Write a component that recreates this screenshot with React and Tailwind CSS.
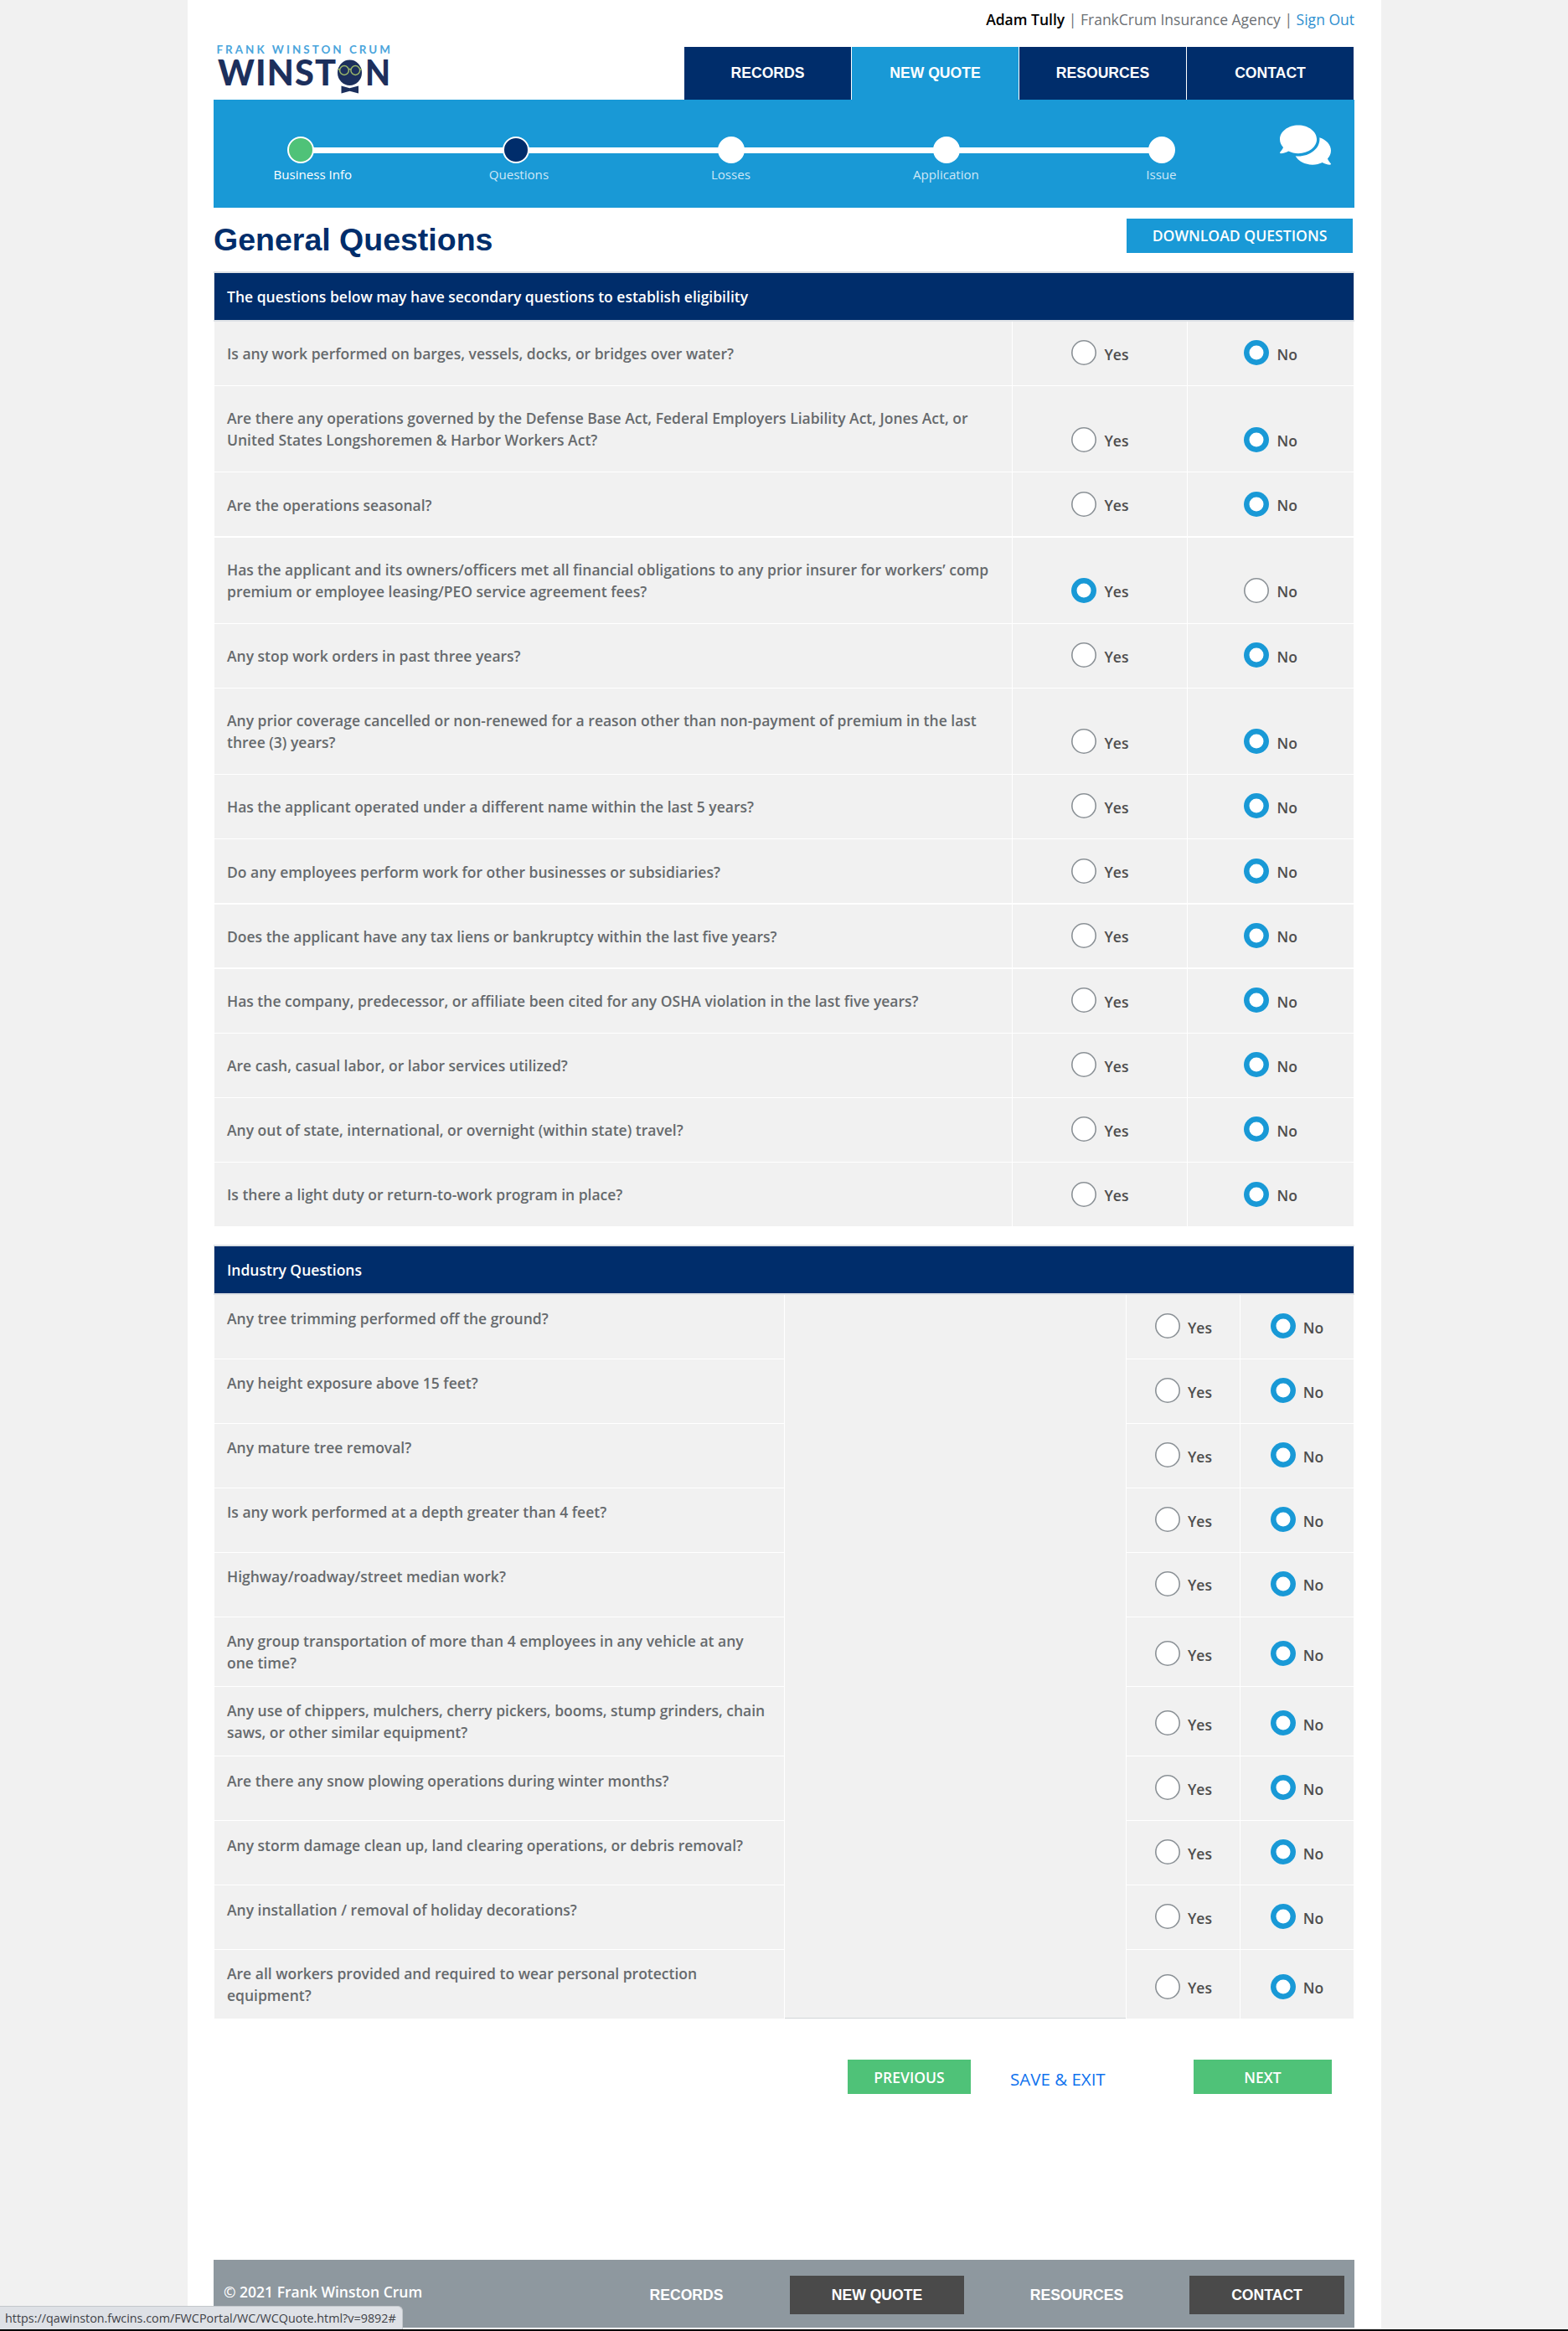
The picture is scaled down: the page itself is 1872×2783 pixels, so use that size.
import React from "react";
import { FaComments } from "react-icons/fa";

const SANS = "font-['Liberation_Sans',Arial,sans-serif]";

const generalQuestions = [
  { lines: ["Is any work performed on barges, vessels, docks, or bridges over water?"], answer: "No" },
  {
    lines: [
      "Are there any operations governed by the Defense Base Act, Federal Employers Liability Act, Jones Act, or",
      "United States Longshoremen & Harbor Workers Act?",
    ],
    answer: "No",
  },
  { lines: ["Are the operations seasonal?"], answer: "No" },
  {
    lines: [
      "Has the applicant and its owners/officers met all financial obligations to any prior insurer for workers’ comp",
      "premium or employee leasing/PEO service agreement fees?",
    ],
    answer: "Yes",
  },
  { lines: ["Any stop work orders in past three years?"], answer: "No" },
  {
    lines: [
      "Any prior coverage cancelled or non-renewed for a reason other than non-payment of premium in the last",
      "three (3) years?",
    ],
    answer: "No",
  },
  { lines: ["Has the applicant operated under a different name within the last 5 years?"], answer: "No" },
  { lines: ["Do any employees perform work for other businesses or subsidiaries?"], answer: "No" },
  { lines: ["Does the applicant have any tax liens or bankruptcy within the last five years?"], answer: "No" },
  { lines: ["Has the company, predecessor, or affiliate been cited for any OSHA violation in the last five years?"], answer: "No" },
  { lines: ["Are cash, casual labor, or labor services utilized?"], answer: "No" },
  { lines: ["Any out of state, international, or overnight (within state) travel?"], answer: "No" },
  { lines: ["Is there a light duty or return-to-work program in place?"], answer: "No" },
];

const industryQuestions = [
  ["Any tree trimming performed off the ground?"],
  ["Any height exposure above 15 feet?"],
  ["Any mature tree removal?"],
  ["Is any work performed at a depth greater than 4 feet?"],
  ["Highway/roadway/street median work?"],
  ["Any group transportation of more than 4 employees in any vehicle at any", "one time?"],
  ["Any use of chippers, mulchers, cherry pickers, booms, stump grinders, chain", "saws, or other similar equipment?"],
  ["Are there any snow plowing operations during winter months?"],
  ["Any storm damage clean up, land clearing operations, or debris removal?"],
  ["Any installation / removal of holiday decorations?"],
  ["Are all workers provided and required to wear personal protection", "equipment?"],
];

function Logo() {
  return (
    <svg width="220" height="64" viewBox="0 0 220 64" className="block" role="img" aria-label="Frank Winston Crum">
      <g fontFamily="Lato, sans-serif">
        <text x="3.5" y="14" fontSize="13.4" fontWeight="700" fill="#4aa5dc" textLength="207.5" lengthAdjust="spacing">
          FRANK WINSTON CRUM
        </text>
        <text x="5" y="51.7" fontSize="41.5" fontWeight="900" fill="#1c2f5c" textLength="141" lengthAdjust="spacing">
          WINST
        </text>
        <text x="181" y="51.7" fontSize="41.5" fontWeight="900" fill="#1c2f5c" textLength="30" lengthAdjust="spacingAndGlyphs">
          N
        </text>
      </g>
      <ellipse cx="162.5" cy="36.8" rx="14.5" ry="15.2" fill="#1c2f5c" />
      <g fill="none" stroke="#9db96a" strokeWidth="1.5">
        <circle cx="156" cy="34" r="5.4" />
        <circle cx="169.3" cy="34" r="5.4" />
        <path d="M161.2 33q1.5-1.2 3 0M148.3 32.8h2.4M174.6 32.8h2.4" />
      </g>
      <path d="M152.5 52.5l10 2.7 10.5-2.7v9l-10.5-2.8-10 2.8z" fill="#1c2f5c" />
    </svg>
  );
}

function NavTab({ label, active }) {
  return (
    <a
      className={`flex h-[63px] w-[199px] items-center justify-center pb-px text-[17.6px] font-bold text-white ${SANS} ${
        active ? "bg-[#1999d6]" : "bg-[#002d6b]"
      }`}
    >
      {label}
    </a>
  );
}

function Step({ label, dot, last, text, shift }) {
  return (
    <div className={`relative ${last ? "w-8" : "w-[257.2px]"}`}>
      {!last && <div className="absolute top-[13px] left-4 h-[7px] w-full bg-white" />}
      <div className={`relative size-8 rounded-full border-2 border-white ${dot}`} />
      <div className={`mt-[3px] w-max text-[15.1px] leading-5 ${text} ${shift}`}>{label}</div>
    </div>
  );
}

function Radio({ label, checked }) {
  return (
    <label className="flex h-[30px] items-center">
      <span
        className={`size-[30px] shrink-0 rounded-full bg-white ${
          checked ? "shadow-[inset_0_0_0_6.5px_#1999d6]" : "shadow-[inset_0_0_0_1.6px_#8a9095]"
        }`}
      />
      <span className="ml-[9px] pt-[3px] text-[17.5px] leading-6 font-semibold text-[#4e4e4e]">{label}</span>
    </label>
  );
}

function TableHeader({ children }) {
  return (
    <div className="-mx-px flex h-[60px] items-center border-x border-y-2 border-[#dee2e6] bg-[#002d6b] pl-[15px] text-[17.5px] font-semibold text-white">
      {children}
    </div>
  );
}

function Lines({ lines }) {
  return lines.map((line) => (
    <div key={line} className="whitespace-nowrap">
      {line}
    </div>
  ));
}

function GeneralTable() {
  return (
    <section className="mx-px mt-[22px]">
      <TableHeader>The questions below may have secondary questions to establish eligibility</TableHeader>
      <div className="flex flex-col gap-[1.25px]">
        {generalQuestions.map(({ lines, answer }) => (
          <div
            key={lines[0]}
            className={`grid grid-cols-[952.2px_207.8px_1fr] gap-[1.25px] ${lines.length > 1 ? "h-[101.95px]" : "h-[75.95px]"}`}
          >
            <div className="bg-[#f1f1f1] pt-[25.2px] pl-[15px] text-[17.5px] leading-[26px] font-semibold text-[#666a6d]">
              <Lines lines={lines} />
            </div>
            <div className="flex items-end bg-[#f1f1f1] pb-[23.6px] pl-[70px]">
              <Radio label="Yes" checked={answer === "Yes"} />
            </div>
            <div className="flex items-end bg-[#f1f1f1] pb-[23.6px] pl-[67px]">
              <Radio label="No" checked={answer === "No"} />
            </div>
          </div>
        ))}
      </div>
    </section>
  );
}

function IndustryTable() {
  return (
    <section className="mx-px mt-[22px]">
      <TableHeader>Industry Questions</TableHeader>
      <div className="flex gap-[1.25px]">
        <div className="flex w-[679.5px] flex-col gap-[1.25px]">
          {industryQuestions.map((lines) => (
            <div
              key={lines[0]}
              className={`bg-[#f1f1f1] pt-[15.3px] pl-[15px] text-[17.5px] leading-[26px] font-semibold text-[#666a6d] ${
                lines.length > 1 ? "h-[82px]" : "h-[75.7px]"
              }`}
            >
              <Lines lines={lines} />
            </div>
          ))}
        </div>
        <div className="w-[407px] border-b border-[#d2d6d9] bg-[#f1f1f1]" />
        <div className="flex flex-1 flex-col gap-[1.25px]">
          {industryQuestions.map((lines) => (
            <div
              key={lines[0]}
              className={`grid grid-cols-[134.6px_1fr] gap-[1.25px] ${lines.length > 1 ? "h-[82px]" : "h-[75.7px]"}`}
            >
              <div className="flex items-end bg-[#f1f1f1] pb-[23.7px] pl-[34px]">
                <Radio label="Yes" />
              </div>
              <div className="flex items-end bg-[#f1f1f1] pb-[23.7px] pl-9">
                <Radio label="No" checked />
              </div>
            </div>
          ))}
        </div>
      </div>
    </section>
  );
}

export default function App() {
  return (
    <div className="flex h-[2783px] flex-col overflow-hidden bg-[#f1f1f1] font-['Open_Sans',sans-serif]">
      <div className="relative ml-56 flex h-[2781px] w-[1425px] flex-col bg-white pl-[31px]">
        <div className="flex w-[1362px] flex-1 flex-col">
          <div className="flex h-14 justify-end gap-[4.6px] pt-[11px] text-[17.5px] leading-6 text-[#6c7074]">
            <span className="font-semibold text-black">Adam Tully</span>
            <span>|</span>
            <span>FrankCrum Insurance Agency</span>
            <span>|</span>
            <a className="text-[#2f8fd0]">Sign Out</a>
          </div>
          <header className="flex h-[63px] justify-between pr-px">
            <div className="-mt-1.5">
              <Logo />
            </div>
            <nav className="flex gap-px">
              <NavTab label="RECORDS" />
              <NavTab label="NEW QUOTE" active />
              <NavTab label="RESOURCES" />
              <NavTab label="CONTACT" />
            </nav>
          </header>
          <div className="flex h-[129px] items-start justify-between bg-[#1999d6] pr-[28.5px] pl-[87.5px]">
            <div className="flex pt-11">
              <Step label="Business Info" dot="bg-[#4fc278]" text="text-white" shift="-ml-4" />
              <Step label="Questions" dot="bg-[#002d6b]" text="text-[#cfe8f7]" shift="-ml-4" />
              <Step label="Losses" dot="bg-white" text="text-[#cfe8f7]" shift="-ml-2" />
              <Step label="Application" dot="bg-white" text="text-[#cfe8f7]" shift="-ml-6" />
              <Step label="Issue" dot="bg-white" text="text-[#cfe8f7]" shift="-ml-[3px]" last />
            </div>
            <FaComments className="mt-[26.5px] h-[54px] w-[61px] text-white" preserveAspectRatio="none" />
          </div>
          <div className="flex h-[54px] justify-between pr-0.5">
            <h1 className={`pt-[15px] text-[37.5px] leading-[46px] font-bold text-[#002d6b] ${SANS}`}>General Questions</h1>
            <button className="mt-[13px] h-[41px] w-[270px] bg-[#1999d6] text-[17.6px] font-semibold text-white">
              DOWNLOAD QUESTIONS
            </button>
          </div>
          <GeneralTable />
          <IndustryTable />
          <div className="mt-[48.4px] flex justify-end pr-[27px]">
            <button className="h-[41px] w-[147px] bg-[#4fc278] pt-0.5 text-[17.5px] font-semibold text-white">PREVIOUS</button>
            <a className="ml-[47px] w-[219px] pt-1.5 text-[20.5px] leading-[34px] font-medium text-[#0f72ee]">SAVE &amp; EXIT</a>
            <button className="h-[41px] w-[165px] bg-[#4fc278] pt-0.5 text-[17.5px] font-semibold text-white">NEXT</button>
          </div>
          <footer className="mt-auto mb-0.5 flex h-[81px] items-start bg-[#8e989f] text-[17.6px] font-bold text-white">
            <div className="w-[472px] pt-[26px] pl-3 text-[17.5px] leading-6 font-semibold">© 2021 Frank Winston Crum</div>
            <nav className={`flex flex-1 pt-[19px] pr-3 ${SANS}`}>
              <a className="flex h-[46px] w-[185px] items-center justify-center">RECORDS</a>
              <a className="ml-[31px] flex h-[46px] w-52 items-center justify-center bg-[#4a4a4a]">NEW QUOTE</a>
              <a className="flex h-[46px] flex-1 items-center justify-center">RESOURCES</a>
              <a className="flex h-[46px] w-[185px] items-center justify-center bg-[#4a4a4a]">CONTACT</a>
            </nav>
          </footer>
        </div>
      </div>
      <div className="h-0.5 bg-black" />
      <div className="absolute top-[2753px] left-0 h-7 w-[481px] rounded-tr-md border-t border-r border-[#c3c7cb] bg-[#dee1e6] pl-1.5 text-[14.35px] leading-[27px] whitespace-nowrap text-[#3f4246]">
        https://qawinston.fwcins.com/FWCPortal/WC/WCQuote.html?v=9892#
      </div>
    </div>
  );
}
